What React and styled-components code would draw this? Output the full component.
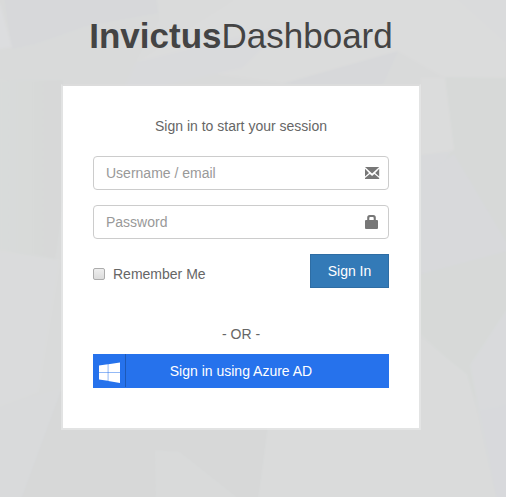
import React from 'react';
import styled, { createGlobalStyle } from 'styled-components';

const GlobalStyle = createGlobalStyle`
  * { box-sizing: border-box; }
  body {
    margin: 0;
    background: #d9dada;
    overflow: hidden;
  }
`;

const Page = styled.main`
  position: relative;
  height: 497px;
  padding: 11px 85px 0 61px;
  overflow: hidden;
  font: 14px/20px "Liberation Sans", Arial, sans-serif;
  color: #666;
`;

const Backdrop = styled.svg`
  position: absolute;
  inset: 0;
  width: 506px;
  height: 497px;
`;

const LoginBox = styled.div`
  position: relative;
  width: 360px;
`;

const Title = styled.h1`
  margin: 0 0 23px;
  font-size: 35px;
  line-height: 50px;
  font-weight: 400;
  text-align: center;
  white-space: nowrap;
  color: #444;
`;

const Card = styled.section`
  height: 346px;
  padding: 30px;
  background: #fff;
  background-clip: padding-box;
  border: 2px solid rgba(236, 237, 237, 0.55);
  border-top-color: rgba(225, 226, 226, 0.3);
`;

const Message = styled.p`
  margin: 0 0 20px;
  text-align: center;
`;

const Field = styled.label`
  display: flex;
  align-items: center;
  height: 34px;
  margin-bottom: 15px;
  padding: 0 8px 0 12px;
  border: 1px solid #ccc;
  border-radius: 4px;
  background: #fff;
`;

const Input = styled.input`
  flex: 1;
  min-width: 0;
  height: 20px;
  padding: 0;
  border: 0;
  outline: 0;
  background: transparent;
  font: inherit;
  color: #555;
  &::placeholder { color: #999; opacity: 1; }
`;

const FieldIcon = styled.svg`
  flex: none;
  width: 15px;
  height: 16px;
  fill: #777;
`;

const Actions = styled.div`
  display: flex;
  justify-content: space-between;
`;

const Remember = styled.label`
  display: flex;
  align-items: center;
  gap: 7px;
  height: 20px;
  margin-top: 10px;
`;

const Checkbox = styled.input`
  appearance: none;
  width: 12px;
  height: 12px;
  margin: 0 1px 0 0;
  border: 1px solid #acacac;
  border-radius: 2px;
  background: linear-gradient(#eee, #dcdcdc);
`;

const SignInButton = styled.button`
  width: 79px;
  height: 34px;
  padding: 0;
  border: 1px solid #2e6da4;
  background: #337ab7;
  font: inherit;
  color: #fff;
`;

const Divider = styled.p`
  margin: 36px 0 10px;
  text-align: center;
`;

const AzureButton = styled.button`
  display: grid;
  grid-template-columns: 33px 1fr 33px;
  align-items: stretch;
  width: 100%;
  height: 34px;
  padding: 0;
  border: 0;
  background: #2672ec;
  font: inherit;
  line-height: 34px;
  color: #fff;
`;

const AzureIcon = styled.span`
  display: flex;
  padding: 8px 0 0 6px;
  height: 33px;
  border-right: 1px solid rgba(0, 0, 0, 0.22);
`;

const WindowsLogo = styled.svg`
  width: 21px;
  height: 21px;
  fill: #fff;
`;

function Facets() {
  return (
    <Backdrop viewBox="0 0 506 497" aria-hidden="true">
      <defs>
        <linearGradient id="left" x2="1">
          <stop stopColor="#d9dbda" />
          <stop offset="1" stopColor="#d7d8d8" />
        </linearGradient>
        <linearGradient id="lower" x2="1" y2="1">
          <stop stopColor="#d9dadb" />
          <stop offset="1" stopColor="#d9dadc" />
        </linearGradient>
        <filter id="soft" x="0" y="0" width="1" height="1">
          <feGaussianBlur stdDeviation="1.2" />
        </filter>
      </defs>
      <path fill="#d9dada" d="M0 0h506v497H0z" />
      <g filter="url(#soft)">
        <path fill="#d9dada" d="M-9-9h524v515H-9z" />
        <path fill="#d7d8da" d="M4-5h151l3 18L86 26 38 43l-26 6z" />
        <path fill="#dcdddf" d="M-5 4H0l12 43-17 3z" />
        <path fill="#dadbdb" d="M157-5l3 25-24 42 48-9 58-58z" />
        <path fill="#dbdcdc" d="M242-5h264v83H445l-47-27-115 32-147-20z" />
        <path fill="#d9dadc" d="M136 62l152-38-46 44-78 18h-39z" />
        <path fill="#d7d8da" d="M398 51l-15 33H283z" />
        <path fill="#dadbdc" d="M452-5h60v54z" />
        <path fill="url(#left)" d="M-5 80h68v122L38 392-5 408z" />
        <path fill="#dadbdc" d="M-5 250l65 10-22 132-43 16z" />
        <path fill="#d7d9d8" d="M445 77l66 1v210l-90-14v-96l33-28z" />
        <path fill="#dbdcdc" d="M421 78h24l9 72-33 5z" />
        <path fill="#d8d9db" d="M421 155l29-3-14 30-15 75z" />
        <path fill="#d8d9db" d="M421 178l33-24 57 96v10l-90 14z" />
        <path fill="#d7d9d8" d="M421 274l90-24v156l-32 5-12-35-46-42z" />
        <path fill="#d9dadc" d="M470 365l41-62v101l-32 7z" />
        <path fill="#d8d9dc" d="M479 411l32-7v98h-14z" />
        <path fill="url(#lower)" d="M-5 409l66-20v113H-5z" />
        <path fill="#d7d8d8" d="M61 390h207v40l-10 72H20z" />
        <path fill="#d9dada" d="M155 450l25 2 63 50h-87z" />
        <path fill="#dadbdb" d="M268 425h153v-87l46 36 30 128H258z" />
      </g>
    </Backdrop>
  );
}

export default function App() {
  return (
    <>
      <GlobalStyle />
      <Page>
        <Facets />
        <LoginBox>
          <Title><b>Invictus</b>Dashboard</Title>
          <Card>
            <Message>Sign in to start your session</Message>
            <Field>
              <Input type="text" placeholder="Username / email" />
              <FieldIcon viewBox="0 0 15 16">
                <path d="M0 2h14.2L7.1 8.6zM0 3.8l4 4.2L0 11.6zM14.2 3.8v7.8L10.2 8zM0 14v-1.1l4.9-4L7.1 11l2.2-2.1 4.9 4V14z" />
              </FieldIcon>
            </Field>
            <Field>
              <Input type="password" placeholder="Password" />
              <FieldIcon viewBox="0 0 15 16">
                <path fillRule="evenodd" d="M2.2 6V3.5Q2.2 1 4.7 1h3.6q2.5 0 2.5 2.5V6H12q1 0 1 1v7q0 1-1 1H1q-1 0-1-1V7q0-1 1-1zM4.3 6h4.4V4q0-1-1-1H5.3q-1 0-1 1z" />
              </FieldIcon>
            </Field>
            <Actions>
              <Remember><Checkbox type="checkbox" />Remember Me</Remember>
              <SignInButton type="button">Sign In</SignInButton>
            </Actions>
            <Divider>- OR -</Divider>
            <AzureButton type="button">
              <AzureIcon>
                <WindowsLogo viewBox="0 0 21 21">
                  <path d="M0 3.6l8.8-1.3v7.8H0zM9.3 2.2L21 .5v9.6H9.3zM0 10.6h8.8v8.2L0 17.6zM9.3 10.6H21V21L9.3 19z" />
                </WindowsLogo>
              </AzureIcon>
              <span>Sign in using Azure AD</span>
            </AzureButton>
          </Card>
        </LoginBox>
      </Page>
    </>
  );
}
